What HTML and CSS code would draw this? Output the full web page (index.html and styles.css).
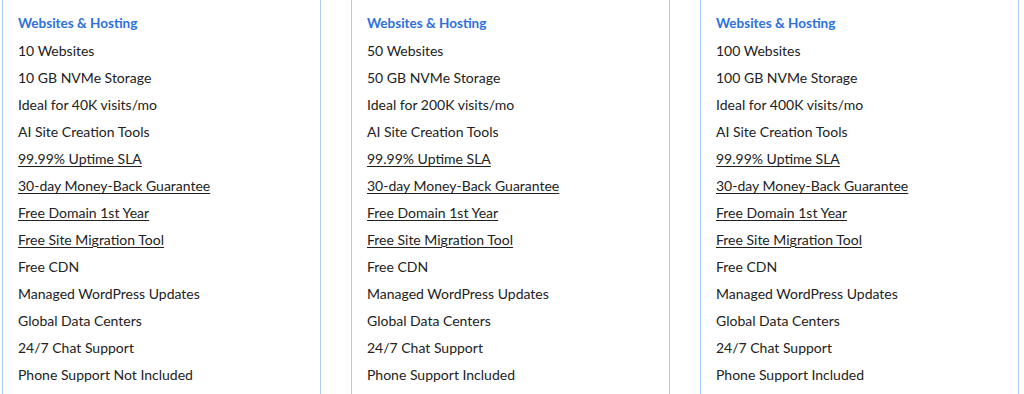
FILE: index.html
```html
<!DOCTYPE html>
<html lang="en">
<head>
<meta charset="utf-8">
<link rel="stylesheet" href="styles.css">
</head>
<body>
<div class="plans">
  <div class="card">
    <ul class="features">
      <li class="heading">Websites &amp; Hosting</li>
      <li>10 Websites</li>
      <li>10 GB NVMe Storage</li>
      <li>Ideal for 40K visits/mo</li>
      <li>AI Site Creation Tools</li>
      <li><a href="#">99.99% Uptime SLA</a></li>
      <li><a href="#">30-day Money-Back Guarantee</a></li>
      <li><a href="#">Free Domain 1st Year</a></li>
      <li><a href="#">Free Site Migration Tool</a></li>
      <li>Free CDN</li>
      <li>Managed WordPress Updates</li>
      <li>Global Data Centers</li>
      <li>24/7 Chat Support</li>
      <li>Phone Support Not Included</li>
    </ul>
  </div>
  <div class="card">
    <ul class="features">
      <li class="heading">Websites &amp; Hosting</li>
      <li>50 Websites</li>
      <li>50 GB NVMe Storage</li>
      <li>Ideal for 200K visits/mo</li>
      <li>AI Site Creation Tools</li>
      <li><a href="#">99.99% Uptime SLA</a></li>
      <li><a href="#">30-day Money-Back Guarantee</a></li>
      <li><a href="#">Free Domain 1st Year</a></li>
      <li><a href="#">Free Site Migration Tool</a></li>
      <li>Free CDN</li>
      <li>Managed WordPress Updates</li>
      <li>Global Data Centers</li>
      <li>24/7 Chat Support</li>
      <li>Phone Support Included</li>
    </ul>
  </div>
  <div class="card">
    <ul class="features">
      <li class="heading">Websites &amp; Hosting</li>
      <li>100 Websites</li>
      <li>100 GB NVMe Storage</li>
      <li>Ideal for 400K visits/mo</li>
      <li>AI Site Creation Tools</li>
      <li><a href="#">99.99% Uptime SLA</a></li>
      <li><a href="#">30-day Money-Back Guarantee</a></li>
      <li><a href="#">Free Domain 1st Year</a></li>
      <li><a href="#">Free Site Migration Tool</a></li>
      <li>Free CDN</li>
      <li>Managed WordPress Updates</li>
      <li>Global Data Centers</li>
      <li>24/7 Chat Support</li>
      <li>Phone Support Included</li>
    </ul>
  </div>
</div>
</body>
</html>
```
FILE: styles.css
```css
html, body {
  margin: 0;
  padding: 0;
  background: #ffffff;
  height: 100%;
  overflow: hidden;
}
body {
  font-family: Lato, "Liberation Sans", sans-serif;
  font-size: 14px;
  color: #222222;
}
.plans {
  display: flex;
  gap: 30px;
  padding-left: 2px;
  height: 100%;
}
.card {
  box-sizing: border-box;
  width: 319px;
  border-left: 1px solid #a9cbf4;
  border-right: 1px solid #a9cbf4;
  padding: 10px 15px 0;
}
.features {
  list-style: none;
  margin: 0;
  padding: 0;
}
.features li {
  line-height: 27px;
  white-space: nowrap;
}
.features li.heading {
  color: #2d70de;
  font-weight: 700;
  font-size: 13.5px;
}
.features a {
  color: inherit;
  text-decoration: underline;
  text-underline-offset: 2px;
}
```
